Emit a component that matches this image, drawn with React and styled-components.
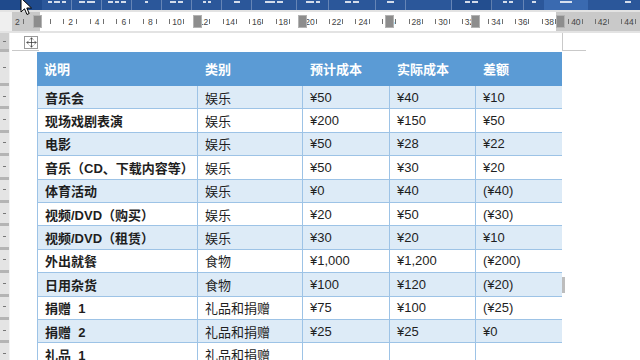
import React from 'react';
import styled, { createGlobalStyle } from 'styled-components';
import { Move } from 'lucide-react';

const Global = createGlobalStyle`
  html, body { margin: 0; padding: 0; background: #fff; }
  body { font-family: "Liberation Sans", "Noto Sans CJK SC", sans-serif; }
  * { box-sizing: border-box; }
`;

const UNIT = 13.3;
const COLS = [161, 105, 87, 86, 86];
const ROW_H = 23.4;
const HEAD_H = 34;

const rows = [
  ['音乐会', '娱乐', '¥50', '¥40', '¥10'],
  ['现场戏剧表演', '娱乐', '¥200', '¥150', '¥50'],
  ['电影', '娱乐', '¥50', '¥28', '¥22'],
  ['音乐（CD、下载内容等）', '娱乐', '¥50', '¥30', '¥20'],
  ['体育活动', '娱乐', '¥0', '¥40', '(¥40)'],
  ['视频/DVD（购买）', '娱乐', '¥20', '¥50', '(¥30)'],
  ['视频/DVD（租赁）', '娱乐', '¥30', '¥20', '¥10'],
  ['外出就餐', '食物', '¥1,000', '¥1,200', '(¥200)'],
  ['日用杂货', '食物', '¥100', '¥120', '(¥20)'],
  ['捐赠 1', '礼品和捐赠', '¥75', '¥100', '(¥25)'],
  ['捐赠 2', '礼品和捐赠', '¥25', '¥25', '¥0'],
  ['礼品 1', '礼品和捐赠', '', '', ''],
];

const Screen = styled.div`
  width: 640px;
  height: 360px;
  overflow: hidden;
  position: relative;
  display: flex;
  flex-direction: column;
  background: #fff;
`;

/* ---------- ribbon strip ---------- */
const Ribbon = styled.div`
  height: 10px;
  flex: none;
  display: flex;
  background: #2b579a;
`;
const RibbonSeg = styled.div`
  width: ${p => p.w}px;
  flex: none;
  background: ${p => p.bg || 'transparent'};
  border-right: 1px solid ${p => (p.sep ? 'rgba(255,255,255,0.28)' : 'transparent')};
  display: flex;
  align-items: flex-start;
  justify-content: center;
  gap: 2px;
  padding-top: 1px;
`;
const RibbonMark = styled.span`
  width: ${p => p.w}px;
  height: 2px;
  background: rgba(255, 255, 255, 0.8);
`;

/* ---------- horizontal ruler ---------- */
const RulerBar = styled.div`
  height: 23px;
  flex: none;
  display: flex;
  padding: 2px 0 2px 0;
  background: #e3e3e3;
  position: relative;
`;
const RulerLead = styled.div`
  width: 12px;
  flex: none;
  background: #efefef;
`;
const RulerTrack = styled.div`
  flex: 1;
  display: flex;
  overflow: hidden;
  background: linear-gradient(
    to right,
    #c9c9c9 0px, #c9c9c9 28px,
    #ffffff 28px, #ffffff 544px,
    #c9c9c9 544px
  );
`;
const RulerScale = styled.div`
  display: flex;
  margin-left: -1.25px;
`;
const RulerCell = styled.div`
  width: ${UNIT}px;
  flex: none;
  position: relative;
  display: flex;
  align-items: center;
  justify-content: center;
  font-size: 8.5px;
  color: #444;
  &::after {
    content: '';
    position: absolute;
    right: 0;
    top: 7px;
    width: 1px;
    height: 5px;
    background: #707070;
  }
`;
const ColMarker = styled.div`
  position: absolute;
  top: 5px;
  left: ${p => p.x}px;
  width: 9px;
  height: 13px;
  background: #8d8d8d;
  border: 1px solid #b3b3b3;
`;

/* ---------- work area ---------- */
const Work = styled.div`
  flex: 1;
  display: flex;
  min-height: 0;
`;
const VRuler = styled.div`
  width: 10px;
  flex: none;
  display: flex;
  flex-direction: column;
  background: #e4e4e4;
  border-right: 1px solid #f3f3f3;
`;
const VCell = styled.div`
  height: ${p => p.h}px;
  flex: none;
  display: flex;
  align-items: center;
  justify-content: center;
  background: ${p => (p.top ? '#cfcfcf' : 'transparent')};
  border-bottom: 3px solid #b4b4b4;
  &::before {
    content: '';
    width: 3px;
    height: 1px;
    background: #777;
  }
`;

const Page = styled.div`
  flex: 1;
  display: flex;
  flex-direction: column;
  background: #fff;
`;
const TopArea = styled.div`
  height: 19px;
  flex: none;
  display: flex;
`;
const LeftCrop = styled.div`
  width: 27px;
  flex: none;
  display: flex;
  justify-content: flex-end;
  align-items: flex-start;
  padding-top: 3px;
  padding-right: 1px;
  border-bottom: 1px solid #c9c9c9;
  margin-left: 2px;
  margin-bottom: 1px;
`;
const MoveHandle = styled.div`
  width: 14px;
  height: 13px;
  border: 1px solid #9a9a9a;
  background: #fff;
  display: flex;
  align-items: center;
  justify-content: center;
  color: #333;
`;
const TableGap = styled.div`
  width: 523px;
  flex: none;
`;
const RightCrop = styled.div`
  width: 24px;
  flex: none;
  border-left: 1px solid #c9c9c9;
  border-bottom: 1px solid #c9c9c9;
  margin-bottom: 1px;
`;

/* ---------- table ---------- */
const Table = styled.div`
  margin-left: 27px;
  width: ${COLS.reduce((a, b) => a + b, 0)}px;
  display: flex;
  flex-direction: column;
  border-left: 1px solid #9dc3e6;
  border-right: 1px solid #9dc3e6;
`;
const Row = styled.div`
  position: relative;
  display: grid;
  grid-template-columns: ${COLS.map(c => c + 'px').join(' ')};
  margin: 0 -1px;
  height: ${p => (p.head ? HEAD_H : ROW_H)}px;
  flex: none;
  background: ${p => (p.head ? '#5b9bd5' : p.band ? '#ddebf7' : '#ffffff')};
  border-bottom: 1px solid ${p => (p.head ? '#5b9bd5' : '#9dc3e6')};
`;
const Cell = styled.div`
  display: flex;
  align-items: center;
  padding-left: 7px;
  white-space: pre;
  font-size: 13px;
  font-weight: ${p => (p.bold ? 700 : 400)};
  color: ${p => (p.head ? '#ffffff' : '#1e1e1e')};
  border-right: 1px solid ${p => (p.head || p.last ? 'transparent' : '#9dc3e6')};
  border-left: ${p => (p.first && !p.head ? '1px solid #9dc3e6' : '0')};
`;
const ResizeGrip = styled.div`
  position: absolute;
  right: -3px;
  top: 4px;
  width: 3px;
  height: 16px;
  background: #bdbdbd;
`;

const Cursor = styled.svg`
  position: absolute;
  left: 20px;
  top: -3px;
`;

const ribbonSegs = [
  { w: 42, bg: '#1f4a8c', marks: [] },
  { w: 30, sep: true, marks: [4, 6, 4] },
  { w: 30, sep: true, marks: [6, 8] },
  { w: 30, sep: true, marks: [5, 4, 5] },
  { w: 30, sep: true, marks: [3] },
  { w: 30, sep: true, marks: [6, 5] },
  { w: 30, sep: true, marks: [3, 3] },
  { w: 30, sep: true, marks: [6] },
  { w: 45, sep: true, marks: [10, 6] },
  { w: 32, sep: true, marks: [8, 4] },
  { w: 47, sep: true, marks: [6, 6] },
  { w: 30, sep: true, marks: [7] },
  { w: 46, sep: true, marks: [] },
  { w: 40, bg: '#234e8f', sep: true, marks: [5, 6] },
  { w: 32, sep: true, marks: [4, 4] },
  { w: 20, marks: [4] },
  { w: 44, bg: '#3a6ab0', marks: [12] },
  { w: 30, marks: [] },
  { w: 20, marks: [6] },
];

const markers = [33, 193, 298, 385, 471, 556];

export default function App() {
  const cells = [];
  for (let n = -2; n <= 45; n++) {
    cells.push(
      <RulerCell key={n}>{n !== 0 && n % 2 === 0 ? Math.abs(n) : ''}</RulerCell>
    );
  }
  const head = ['说明', '类别', '预计成本', '实际成本', '差额'];
  return (
    <Screen>
      <Global />
      <Ribbon>
        {ribbonSegs.map((s, i) => (
          <RibbonSeg key={i} w={s.w} bg={s.bg} sep={s.sep}>
            {s.marks.map((m, j) => (
              <RibbonMark key={j} w={m} />
            ))}
          </RibbonSeg>
        ))}
      </Ribbon>
      <RulerBar>
        <RulerLead />
        <RulerTrack>
          <RulerScale>{cells}</RulerScale>
        </RulerTrack>
        {markers.map(x => (
          <ColMarker key={x} x={x} />
        ))}
      </RulerBar>
      <Work>
        <VRuler>
          <VCell h={19} top />
          <VCell h={HEAD_H} />
          {rows.map((_, i) => (
            <VCell key={i} h={ROW_H} />
          ))}
        </VRuler>
        <Page>
          <TopArea>
            <LeftCrop>
              <MoveHandle>
                <Move size={11} strokeWidth={1.6} />
              </MoveHandle>
            </LeftCrop>
            <TableGap />
            <RightCrop />
          </TopArea>
          <Table>
            <Row head>
              {head.map((h, i) => (
                <Cell key={i} head bold>
                  {h}
                </Cell>
              ))}
            </Row>
            {rows.map((r, i) => (
              <Row key={i} band={i % 2 === 0}>
                {r.map((c, j) => (
                  <Cell key={j} bold={j === 0} first={j === 0} last={j === 4}>
                    {j === 0 ? c.replace(' ', '  ') : c}
                  </Cell>
                ))}
                {i === 8 && <ResizeGrip />}
              </Row>
            ))}
          </Table>
        </Page>
      </Work>
      <Cursor width="13" height="19" viewBox="0 0 13 19">
        <path
          d="M1 1 L1 15 L4.5 11.8 L7 17.5 L9.2 16.5 L6.8 11 L11.5 11 Z"
          fill="#fff"
          stroke="#000"
          strokeWidth="1"
          strokeLinejoin="round"
        />
      </Cursor>
    </Screen>
  );
}
